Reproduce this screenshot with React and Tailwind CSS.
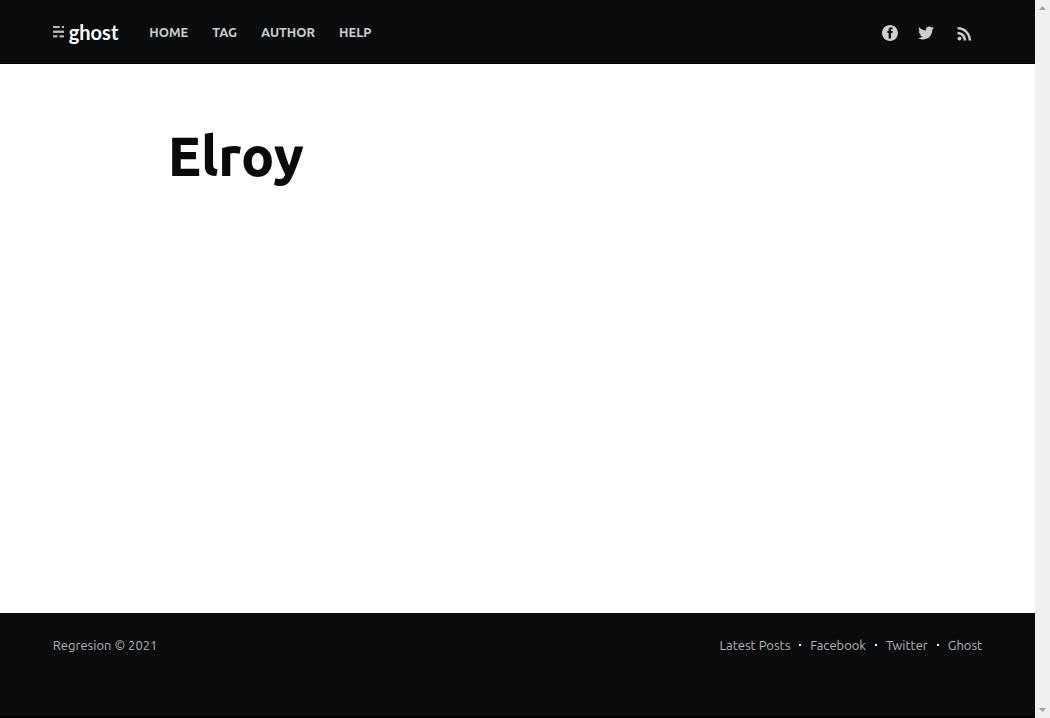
import React from "react";

const navItems = ["Home", "Tag", "Author", "Help"];
const footerItems = ["Latest Posts", "Facebook", "Twitter", "Ghost"];

function LogoMark() {
  return (
    <svg viewBox="0 0 11 12" className="h-3 w-[11px]" fill="#b9b9ba" aria-hidden="true">
      <rect x="0" y="0" width="6.6" height="2" />
      <rect x="8.8" y="0" width="2.2" height="2" />
      <rect x="0" y="4.6" width="11" height="2.3" />
      <rect x="0" y="9.3" width="4.4" height="2.1" />
      <rect x="6.4" y="9.3" width="4.6" height="2.1" />
    </svg>
  );
}

function FacebookIcon() {
  return (
    <svg viewBox="0 0 32 32" className="size-4" fill="currentColor" aria-hidden="true">
      <path d="M16 0c8.837 0 16 7.163 16 16s-7.163 16-16 16S0 24.837 0 16 7.163 0 16 0zm5.204 4.911h-3.546c-2.103 0-4.443.885-4.443 3.934.01 1.062 0 2.08 0 3.225h-2.433v3.872h2.509v11.147h4.61v-11.22h3.042l.275-3.81h-3.397s.007-1.695 0-2.187c0-1.205 1.253-1.136 1.329-1.136.596 0 1.756.002 2.054 0V4.911z" />
    </svg>
  );
}

function TwitterIcon() {
  return (
    <svg viewBox="0 0 32 32" className="size-[18px]" fill="currentColor" aria-hidden="true">
      <path d="M30.063 7.313c-.813 1.125-1.75 2.125-2.875 2.938v.75c0 1.563-.188 3.125-.688 4.625a15.088 15.088 0 0 1-2.063 4.438c-.875 1.438-2 2.688-3.25 3.813a15.015 15.015 0 0 1-4.625 2.563c-1.813.688-3.75 1-5.75 1-3.25 0-6.188-.875-8.875-2.625.438.063.875.125 1.375.125 2.688 0 5.063-.875 7.188-2.5-1.25 0-2.375-.375-3.375-1.125s-1.688-1.688-2.063-2.875c.438.063.813.125 1.125.125.5 0 1-.063 1.5-.25-1.313-.25-2.438-.938-3.313-1.938a5.673 5.673 0 0 1-1.313-3.688v-.063c.813.438 1.688.688 2.625.688a5.228 5.228 0 0 1-1.875-2c-.5-.875-.688-1.813-.688-2.75 0-1.063.25-2.063.75-2.938 1.438 1.75 3.188 3.188 5.25 4.25s4.313 1.688 6.688 1.813a5.579 5.579 0 0 1 1.5-5.438c1.125-1.125 2.5-1.688 4.125-1.688s3.063.625 4.188 1.813a11.48 11.48 0 0 0 3.688-1.375c-.438 1.375-1.313 2.438-2.563 3.188 1.125-.125 2.188-.438 3.313-.875z" />
    </svg>
  );
}

function RssIcon() {
  return (
    <svg viewBox="0 0 24 24" className="size-[21px]" fill="currentColor" aria-hidden="true">
      <circle cx="6.18" cy="17.82" r="2.18" />
      <path d="M4 4.44v2.83c7.03 0 12.73 5.7 12.73 12.73h2.83c0-8.59-6.97-15.56-15.56-15.56zm0 5.66v2.83c3.9 0 7.07 3.17 7.07 7.07h2.83c0-5.47-4.43-9.9-9.9-9.9z" />
    </svg>
  );
}

function ScrollTrack() {
  return (
    <div className="flex w-[15px] shrink-0 flex-col items-center justify-between bg-[#f0f0f0] py-1.5" aria-hidden="true">
      <svg viewBox="0 0 7 4" className="h-1 w-[7px]" fill="#a3a3a3">
        <path d="M3.5 0 7 4H0z" />
      </svg>
      <svg viewBox="0 0 7 4" className="h-1 w-[7px]" fill="#a3a3a3">
        <path d="M0 0h7L3.5 4z" />
      </svg>
    </div>
  );
}

export default function App() {
  return (
    <div className="flex min-h-screen bg-white font-['Ubuntu','Noto_Sans',sans-serif] text-[#090a0b]">
      <div className="flex min-w-0 grow flex-col">
        <header className="flex h-16 items-center justify-between border-b border-black bg-[#0a0b0c] px-[5.1%] pt-px">
          <div className="flex items-center gap-[31px]">
            <a href="#home" className="flex items-center gap-[5px] text-white">
              <LogoMark />
              <span className="font-['Lato',sans-serif] text-[20px] leading-6 font-bold">ghost</span>
            </a>
            <nav className="flex gap-6">
              {navItems.map((item) => (
                <a key={item} href={`#${item}`} className="text-[13px] leading-5 font-semibold text-[#cececf] uppercase">
                  {item}
                </a>
              ))}
            </nav>
          </div>
          <div className="flex items-center gap-[19px] pt-0.5 pr-[7px] text-[#cececf]">
            <a href="#facebook" aria-label="Facebook"><FacebookIcon /></a>
            <a href="#twitter" aria-label="Twitter"><TwitterIcon /></a>
            <a href="#rss" aria-label="RSS"><RssIcon /></a>
          </div>
        </header>

        <main className="grow px-[16.2%] pt-14">
          <h1 className="text-[55px] leading-[72px] font-extrabold">Elroy</h1>
        </main>

        <footer className="flex h-[105px] items-start justify-between border-b-2 border-black bg-[#0a0b0c] px-[5.1%] pt-[22px] text-[13px] leading-5 text-[#b5b5b6]">
          <p>Regresion © 2021</p>
          <nav className="flex items-center gap-[9px]">
            {footerItems.map((item, index) => (
              <React.Fragment key={item}>
                {index > 0 && <span className="size-0.5 bg-white" />}
                <a href={`#${item}`}>{item}</a>
              </React.Fragment>
            ))}
          </nav>
        </footer>
      </div>
      <ScrollTrack />
    </div>
  );
}
